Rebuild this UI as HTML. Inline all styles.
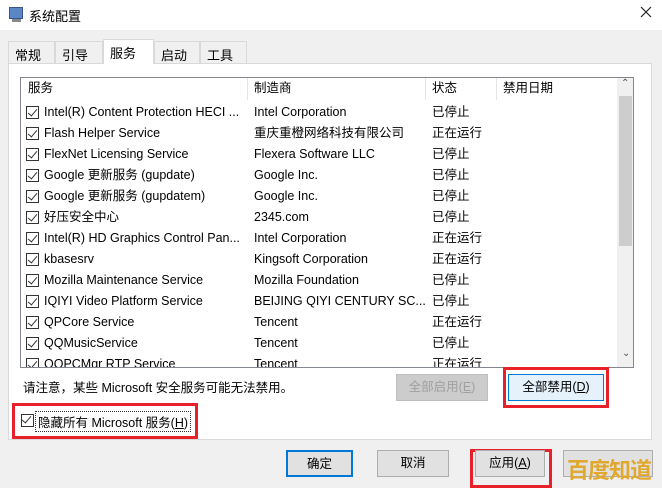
<!DOCTYPE html><html><head><meta charset="utf-8"><style>
*{box-sizing:border-box;margin:0;padding:0}
body{width:662px;height:488px;background:#f0f0f0;font-family:"Liberation Sans","Noto Sans CJK SC",sans-serif;font-size:12.5px;color:#000;position:relative;overflow:hidden}
.a{position:absolute}
.title{left:0;top:0;width:662px;height:30px;background:#fff}
.tab{top:41px;height:22px;border:1px solid #d9d9d9;border-bottom:none;background:#f0f0f0;padding:3px 0 0 6px;font-size:13px}
.panel{left:8px;top:63px;width:644px;height:377px;background:#fff;border:1px solid #d9d9d9}
.list{left:20px;top:77px;width:614px;height:291px;border:1px solid #828790;background:#fff;overflow:hidden}
.row{position:absolute;left:0;height:21px;line-height:21px;white-space:nowrap}
.cb{position:absolute;left:5px;top:4px;width:13px;height:13px;border:1px solid #333;background:#fff}
.cb:after{content:"";position:absolute;left:3px;top:0px;width:4px;height:8px;border:solid #333;border-width:0 1.3px 1.3px 0;transform:rotate(40deg)}
.c1{position:absolute;left:23px}.c2{position:absolute;left:233px}.c3{position:absolute;left:411px}
.btn{height:27px;border:1px solid #adadad;background:#e1e1e1;text-align:center;line-height:25px}
.red{border:3px solid #e8202a}
</style></head><body>
<div class="a title"></div>
<div class="a" style="left:9px;top:7px;width:14px;height:12px;background:#5b86c5;border:1px solid #36558a"></div>
<div class="a" style="left:12px;top:19px;width:9px;height:3px;background:#888"></div>
<div class="a" style="left:29px;top:6px;font-size:13px">系统配置</div>
<svg class="a" style="left:640px;top:6px" width="12" height="12"><path d="M1 1L11 11M11 1L1 11" stroke="#222" stroke-width="1.2"/></svg>
<div class="a tab" style="left:8px;width:47px">常规</div>
<div class="a tab" style="left:55px;width:48px">引导</div>
<div class="a tab" style="left:103px;top:39px;height:25px;width:51px;background:#fff;z-index:2">服务</div>
<div class="a tab" style="left:154px;width:46px">启动</div>
<div class="a tab" style="left:200px;width:47px">工具</div>
<div class="a panel"></div>
<div class="a list">
<div class="row" style="top:0;height:22px;width:596px;">
<span style="position:absolute;left:7px">服务</span>
<span style="position:absolute;left:226px;top:0;width:1px;height:22px;background:#e5e5e5"></span>
<span class="c2">制造商</span>
<span style="position:absolute;left:404px;width:1px;height:22px;background:#e5e5e5"></span>
<span class="c3">状态</span>
<span style="position:absolute;left:475px;width:1px;height:22px;background:#e5e5e5"></span>
<span style="position:absolute;left:482px">禁用日期</span>
</div>
<div class="a" style="left:596px;top:0;width:17px;height:289px;background:#f0f0f0"></div>
<div class="a" style="left:598px;top:18px;width:13px;height:150px;background:#cdcdcd"></div>
<div class="a" style="left:600px;top:0px;font-size:10px;color:#555">⌃</div>
<div class="a" style="left:601px;top:270px;font-size:10px;color:#555">⌄</div>
<div class="row" style="top:24px"><i class="cb"></i><span class="c1">Intel(R) Content Protection HECI ...</span><span class="c2">Intel Corporation</span><span class="c3">已停止</span></div>
<div class="row" style="top:45px"><i class="cb"></i><span class="c1">Flash Helper Service</span><span class="c2">重庆重橙网络科技有限公司</span><span class="c3">正在运行</span></div>
<div class="row" style="top:66px"><i class="cb"></i><span class="c1">FlexNet Licensing Service</span><span class="c2">Flexera Software LLC</span><span class="c3">已停止</span></div>
<div class="row" style="top:87px"><i class="cb"></i><span class="c1">Google 更新服务 (gupdate)</span><span class="c2">Google Inc.</span><span class="c3">已停止</span></div>
<div class="row" style="top:108px"><i class="cb"></i><span class="c1">Google 更新服务 (gupdatem)</span><span class="c2">Google Inc.</span><span class="c3">已停止</span></div>
<div class="row" style="top:129px"><i class="cb"></i><span class="c1">好压安全中心</span><span class="c2">2345.com</span><span class="c3">已停止</span></div>
<div class="row" style="top:150px"><i class="cb"></i><span class="c1">Intel(R) HD Graphics Control Pan...</span><span class="c2">Intel Corporation</span><span class="c3">正在运行</span></div>
<div class="row" style="top:171px"><i class="cb"></i><span class="c1">kbasesrv</span><span class="c2">Kingsoft Corporation</span><span class="c3">正在运行</span></div>
<div class="row" style="top:192px"><i class="cb"></i><span class="c1">Mozilla Maintenance Service</span><span class="c2">Mozilla Foundation</span><span class="c3">已停止</span></div>
<div class="row" style="top:213px"><i class="cb"></i><span class="c1">IQIYI Video Platform Service</span><span class="c2">BEIJING QIYI CENTURY SC...</span><span class="c3">已停止</span></div>
<div class="row" style="top:234px"><i class="cb"></i><span class="c1">QPCore Service</span><span class="c2">Tencent</span><span class="c3">正在运行</span></div>
<div class="row" style="top:255px"><i class="cb"></i><span class="c1">QQMusicService</span><span class="c2">Tencent</span><span class="c3">已停止</span></div>
<div class="row" style="top:276px"><i class="cb"></i><span class="c1">QQPCMgr RTP Service</span><span class="c2">Tencent</span><span class="c3">正在运行</span></div>
</div>
<div class="a" style="left:23px;top:377px">请注意，某些 Microsoft 安全服务可能无法禁用。</div>
<div class="a btn" style="left:396px;top:374px;width:92px;color:#a0a0a0;background:#ccc;border-color:#bfbfbf">全部启用(<u>E</u>)</div>
<div class="a red" style="left:503px;top:367px;width:106px;height:41px"></div>
<div class="a btn" style="left:508px;top:374px;width:96px;background:#e5f1fb;border-color:#0078d7">全部禁用(<u>D</u>)</div>
<div class="a red" style="left:12px;top:403px;width:186px;height:36px"></div>
<div class="a" style="left:21px;top:414px;width:13px;height:13px;border:1px solid #333;background:#fff"><i class="cb" style="left:-1px;top:-1px;border:none;background:none"></i></div>
<div class="a" style="left:35px;top:411px;border:1px dotted #333;padding:0 2px">隐藏所有 Microsoft 服务(<u>H</u>)</div>
<div class="a btn" style="left:286px;top:450px;width:67px;border:2px solid #0078d7">确定</div>
<div class="a btn" style="left:377px;top:450px;width:72px">取消</div>
<div class="a red" style="left:470px;top:449px;width:82px;height:39px"></div>
<div class="a btn" style="left:475px;top:450px;width:70px">应用(<u>A</u>)</div>
<div class="a btn" style="left:563px;top:450px;width:90px"></div>
<div class="a" style="left:567px;top:453px;font-size:22px;font-weight:bold;color:#e0a82e;letter-spacing:-1px">百度知道</div>
</body></html>
